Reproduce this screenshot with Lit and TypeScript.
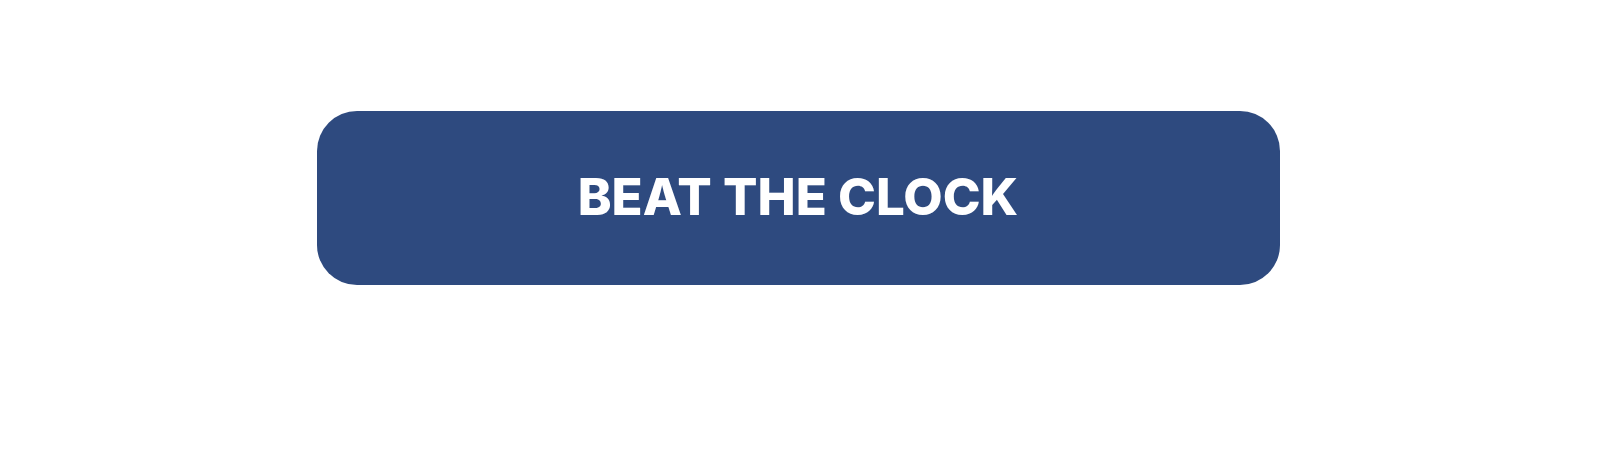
import { LitElement, html, css } from "lit";
import { customElement } from "lit/decorators.js";

@customElement("app-root")
export class AppRoot extends LitElement {
  static styles = css`
    :host {
      display: block;
      min-height: 100vh;
      box-sizing: border-box;
      padding: 111px 20px 111px 16px;
      background: #fff;
    }
    .cta {
      display: block;
      width: 100%;
      max-width: 963px;
      margin: 0 auto;
      padding: 55px 24px 57px;
      border: 0;
      border-radius: 40px;
      background: #2e4a7f;
      color: #fff;
      font: 800 51px/62px Inter, sans-serif;
      text-align: center;
      cursor: pointer;
    }
  `;

  render() {
    return html`<button class="cta" type="button">BEAT THE CLOCK</button>`;
  }
}
